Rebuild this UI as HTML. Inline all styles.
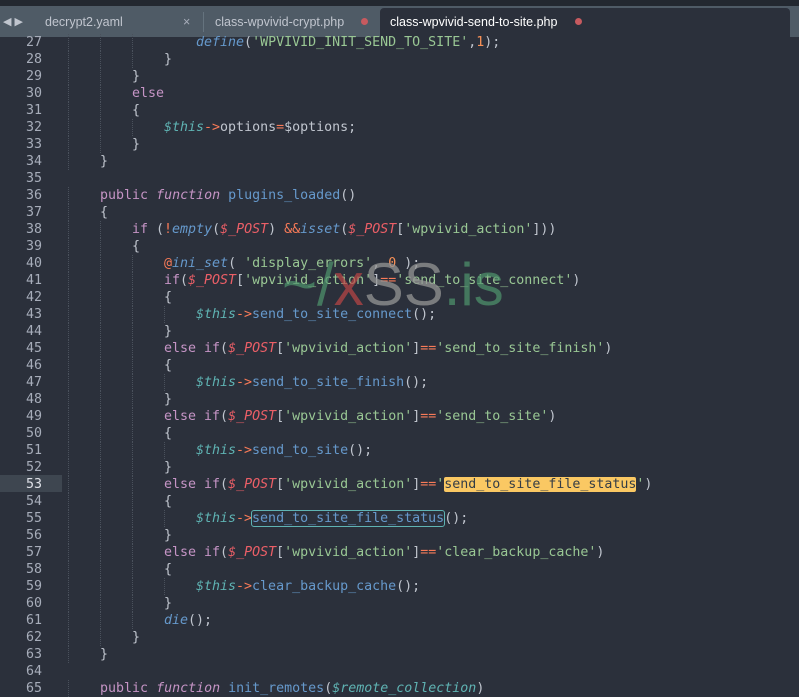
<!DOCTYPE html><html><head><style>
body{margin:0;width:799px;height:688px;overflow:hidden;background:#2b303b;font-family:"DejaVu Sans Mono",monospace;position:relative}
#tabs{position:absolute;left:0;top:0;width:799px;height:37px;background:#4f5b66;}
.tab{position:absolute;top:8px;height:29px;line-height:29px;font-family:"Liberation Sans",sans-serif;font-size:12.5px;color:#c0c5ce;}
.dot{position:absolute;top:18px;width:7px;height:7px;border-radius:50%;background:#c75a5f;}
.r{position:absolute;left:0;height:17px;width:799px}
.ln{position:absolute;left:0;width:42px;text-align:right;font-size:13.3px;color:#a7adba;line-height:17px;}
.l{position:absolute;white-space:pre;font-size:13.3px;line-height:17px;color:#c0c5ce;}
.k{color:#c594c5}.ki{color:#c594c5;font-style:italic}.f{color:#6699cc}.fi{color:#6699cc;font-style:italic}
.s{color:#99c794}.t{color:#5fb3b3;font-style:italic}.o{color:#f97b58}.p{color:#ec5f67;font-style:italic}.n{color:#f99157}
.i1,.i2,.i3,.i4{position:absolute;top:0;height:17px;border-left:1px dotted #4a515c}
.i1{left:68px}.i2{left:100px}.i3{left:132px}.i4{left:164px}
</style></head><body>
<div id="tabs"><div style="position:absolute;left:0;top:0;width:799px;height:6px;background:#232830"></div>
<div class="tab" style="left:3px;font-size:11px">◀ ▶</div>
<div class="tab" style="left:45px">decrypt2.yaml</div>
<div class="tab" style="left:183px;color:#a7adba">×</div>
<div style="position:absolute;left:203px;top:12px;height:20px;border-left:1px solid #65737e"></div>
<div class="tab" style="left:215px">class-wpvivid-crypt.php</div>
<div class="dot" style="left:361px"></div>
<div style="position:absolute;left:380px;top:8px;width:410px;height:29px;background:#2b303b;border-radius:4px 4px 0 0"></div>
<div class="tab" style="left:390px;color:#fff">class-wpvivid-send-to-site.php</div>
<div class="dot" style="left:575px"></div>
</div>
<div style="position:absolute;left:0;top:475px;width:62px;height:17px;background:#3e4650"></div>

<div class="r" style="top:34px"><i class="i1"></i><i class="i2"></i><i class="i3"></i><div class="ln">27</div><div class="l" style="left:196px"><span class="fi">define</span>(<span class="s">'WPVIVID_INIT_SEND_TO_SITE'</span>,<span class="n">1</span>);</div></div>
<div class="r" style="top:51px"><i class="i1"></i><i class="i2"></i><i class="i3"></i><div class="ln">28</div><div class="l" style="left:164px">}</div></div>
<div class="r" style="top:68px"><i class="i1"></i><i class="i2"></i><div class="ln">29</div><div class="l" style="left:132px">}</div></div>
<div class="r" style="top:85px"><i class="i1"></i><i class="i2"></i><div class="ln">30</div><div class="l" style="left:132px"><span class="k">else</span></div></div>
<div class="r" style="top:102px"><i class="i1"></i><i class="i2"></i><div class="ln">31</div><div class="l" style="left:132px">{</div></div>
<div class="r" style="top:119px"><i class="i1"></i><i class="i2"></i><i class="i3"></i><div class="ln">32</div><div class="l" style="left:164px"><span class="t">$this</span><span class="o">-&gt;</span>options<span class="o">=</span>$options;</div></div>
<div class="r" style="top:136px"><i class="i1"></i><i class="i2"></i><div class="ln">33</div><div class="l" style="left:132px">}</div></div>
<div class="r" style="top:153px"><i class="i1"></i><div class="ln">34</div><div class="l" style="left:100px">}</div></div>
<div class="r" style="top:170px"><div class="ln">35</div></div>
<div class="r" style="top:187px"><i class="i1"></i><div class="ln">36</div><div class="l" style="left:100px"><span class="k">public</span> <span class="ki">function</span> <span class="f">plugins_loaded</span>()</div></div>
<div class="r" style="top:204px"><i class="i1"></i><div class="ln">37</div><div class="l" style="left:100px">{</div></div>
<div class="r" style="top:221px"><i class="i1"></i><i class="i2"></i><div class="ln">38</div><div class="l" style="left:132px"><span class="k">if</span> (<span class="o">!</span><span class="fi">empty</span>(<span class="p">$_POST</span>) <span class="o">&amp;&amp;</span><span class="fi">isset</span>(<span class="p">$_POST</span>[<span class="s">'wpvivid_action'</span>]))</div></div>
<div class="r" style="top:238px"><i class="i1"></i><i class="i2"></i><div class="ln">39</div><div class="l" style="left:132px">{</div></div>
<div class="r" style="top:255px"><i class="i1"></i><i class="i2"></i><i class="i3"></i><div class="ln">40</div><div class="l" style="left:164px"><span class="o">@</span><span class="fi">ini_set</span>( <span class="s">'display_errors'</span>, <span class="n">0</span> );</div></div>
<div class="r" style="top:272px"><i class="i1"></i><i class="i2"></i><i class="i3"></i><div class="ln">41</div><div class="l" style="left:164px"><span class="k">if</span>(<span class="p">$_POST</span>[<span class="s">'wpvivid_action'</span>]<span class="o">==</span><span class="s">'send_to_site_connect'</span>)</div></div>
<div class="r" style="top:289px"><i class="i1"></i><i class="i2"></i><i class="i3"></i><div class="ln">42</div><div class="l" style="left:164px">{</div></div>
<div class="r" style="top:306px"><i class="i1"></i><i class="i2"></i><i class="i3"></i><i class="i4"></i><div class="ln">43</div><div class="l" style="left:196px"><span class="t">$this</span><span class="o">-&gt;</span><span class="f">send_to_site_connect</span>();</div></div>
<div class="r" style="top:323px"><i class="i1"></i><i class="i2"></i><i class="i3"></i><div class="ln">44</div><div class="l" style="left:164px">}</div></div>
<div class="r" style="top:340px"><i class="i1"></i><i class="i2"></i><i class="i3"></i><div class="ln">45</div><div class="l" style="left:164px"><span class="k">else if</span>(<span class="p">$_POST</span>[<span class="s">'wpvivid_action'</span>]<span class="o">==</span><span class="s">'send_to_site_finish'</span>)</div></div>
<div class="r" style="top:357px"><i class="i1"></i><i class="i2"></i><i class="i3"></i><div class="ln">46</div><div class="l" style="left:164px">{</div></div>
<div class="r" style="top:374px"><i class="i1"></i><i class="i2"></i><i class="i3"></i><i class="i4"></i><div class="ln">47</div><div class="l" style="left:196px"><span class="t">$this</span><span class="o">-&gt;</span><span class="f">send_to_site_finish</span>();</div></div>
<div class="r" style="top:391px"><i class="i1"></i><i class="i2"></i><i class="i3"></i><div class="ln">48</div><div class="l" style="left:164px">}</div></div>
<div class="r" style="top:408px"><i class="i1"></i><i class="i2"></i><i class="i3"></i><div class="ln">49</div><div class="l" style="left:164px"><span class="k">else if</span>(<span class="p">$_POST</span>[<span class="s">'wpvivid_action'</span>]<span class="o">==</span><span class="s">'send_to_site'</span>)</div></div>
<div class="r" style="top:425px"><i class="i1"></i><i class="i2"></i><i class="i3"></i><div class="ln">50</div><div class="l" style="left:164px">{</div></div>
<div class="r" style="top:442px"><i class="i1"></i><i class="i2"></i><i class="i3"></i><i class="i4"></i><div class="ln">51</div><div class="l" style="left:196px"><span class="t">$this</span><span class="o">-&gt;</span><span class="f">send_to_site</span>();</div></div>
<div class="r" style="top:459px"><i class="i1"></i><i class="i2"></i><i class="i3"></i><div class="ln">52</div><div class="l" style="left:164px">}</div></div>
<div class="r" style="top:476px"><i class="i1"></i><i class="i2"></i><i class="i3"></i><div class="ln" style="color:#dfe1e8">53</div><div class="l" style="left:164px"><span class="k">else if</span>(<span class="p">$_POST</span>[<span class="s">'wpvivid_action'</span>]<span class="o">==</span><span class="s">'<span style="background:#fac863;color:#343d46;border-radius:2px">send_to_site_file_status</span>'</span>)</div></div>
<div class="r" style="top:493px"><i class="i1"></i><i class="i2"></i><i class="i3"></i><div class="ln">54</div><div class="l" style="left:164px">{</div></div>
<div class="r" style="top:510px"><i class="i1"></i><i class="i2"></i><i class="i3"></i><i class="i4"></i><div class="ln">55</div><div class="l" style="left:196px"><span class="t">$this</span><span class="o">-&gt;</span><span class="f" style="outline:1px solid #5fb3b3;border-radius:2px">send_to_site_file_status</span>();</div></div>
<div class="r" style="top:527px"><i class="i1"></i><i class="i2"></i><i class="i3"></i><div class="ln">56</div><div class="l" style="left:164px">}</div></div>
<div class="r" style="top:544px"><i class="i1"></i><i class="i2"></i><i class="i3"></i><div class="ln">57</div><div class="l" style="left:164px"><span class="k">else if</span>(<span class="p">$_POST</span>[<span class="s">'wpvivid_action'</span>]<span class="o">==</span><span class="s">'clear_backup_cache'</span>)</div></div>
<div class="r" style="top:561px"><i class="i1"></i><i class="i2"></i><i class="i3"></i><div class="ln">58</div><div class="l" style="left:164px">{</div></div>
<div class="r" style="top:578px"><i class="i1"></i><i class="i2"></i><i class="i3"></i><i class="i4"></i><div class="ln">59</div><div class="l" style="left:196px"><span class="t">$this</span><span class="o">-&gt;</span><span class="f">clear_backup_cache</span>();</div></div>
<div class="r" style="top:595px"><i class="i1"></i><i class="i2"></i><i class="i3"></i><div class="ln">60</div><div class="l" style="left:164px">}</div></div>
<div class="r" style="top:612px"><i class="i1"></i><i class="i2"></i><i class="i3"></i><div class="ln">61</div><div class="l" style="left:164px"><span class="fi">die</span>();</div></div>
<div class="r" style="top:629px"><i class="i1"></i><i class="i2"></i><div class="ln">62</div><div class="l" style="left:132px">}</div></div>
<div class="r" style="top:646px"><i class="i1"></i><div class="ln">63</div><div class="l" style="left:100px">}</div></div>
<div class="r" style="top:663px"><div class="ln">64</div></div>
<div class="r" style="top:680px"><i class="i1"></i><div class="ln">65</div><div class="l" style="left:100px"><span class="k">public</span> <span class="ki">function</span> <span class="f">init_remotes</span>(<span class="t">$remote_collection</span>)</div></div>

<div style="position:absolute;left:282px;top:255px;font-family:'Liberation Sans',sans-serif;font-size:60px;line-height:60px;color:rgba(150,150,150,0.75);white-space:pre"><span style="color:rgba(80,150,110,0.7)">~/</span><span style="color:rgba(190,70,70,0.7)">x</span>SS<span style="color:rgba(80,150,110,0.7)">.is</span></div>
</body></html>
